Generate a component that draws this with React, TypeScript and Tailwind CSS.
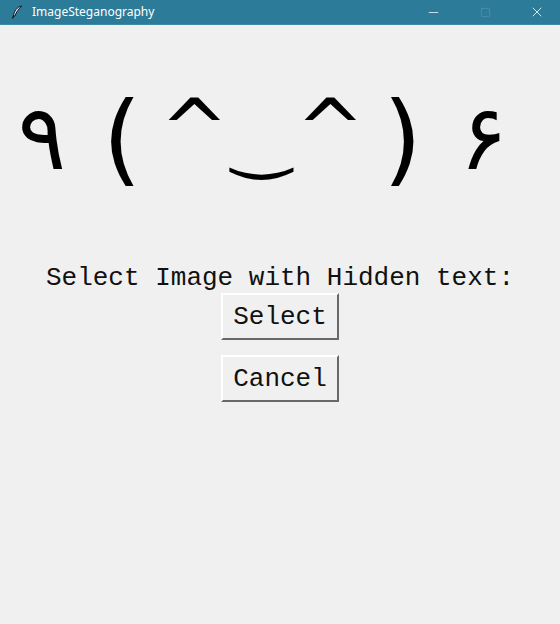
import { Minus, Square, X } from "lucide-react";

const glyphs = [
  { ch: "٩", cls: "w-[84px] text-[90px]" },
  { ch: "(", cls: "w-[76px] text-[100px] -mt-[4px]" },
  { ch: "^", cls: "w-[67px] text-[82px] -mt-[4px]" },
  { ch: "‿", cls: "w-[69px] text-[72px] mt-[9px]" },
  { ch: "^", cls: "w-[68px] text-[82px] -mt-[4px]" },
  { ch: ")", cls: "w-[77px] text-[100px] -mt-[4px]" },
  { ch: "۶", cls: "w-[85px] text-[90px]" },
];

function Feather() {
  return (
    <svg width="12" height="14" viewBox="0 0 12 14">
      <path d="M10.5 1 C6 2 3 6 2.5 11 L4 11 C5 7 8 4 10.5 1 Z" fill="#dfe9f5" stroke="#111" strokeWidth="1" />
      <path d="M2.5 11 L1.5 13.5" stroke="#111" strokeWidth="1.2" />
    </svg>
  );
}

export default function App() {
  return (
    <div className="w-[560px] h-[624px] bg-[#f0f0f0] flex flex-col overflow-hidden">
      <div className="h-[25px] bg-[#2c7b99] flex items-center text-white shrink-0 border-b border-[#3f8aa6]">
        <div className="w-[32px] flex justify-center pl-[2px]">
          <Feather />
        </div>
        <span className="text-[12px] font-['Noto_Sans',sans-serif]">ImageSteganography</span>
        <div className="ml-auto flex items-center">
          <div className="w-[46px] flex justify-center">
            <Minus size={15} strokeWidth={1.2} />
          </div>
          <div className="w-[46px] flex justify-center ml-[6px] opacity-25">
            <Square size={11} strokeWidth={1.2} />
          </div>
          <div className="w-[46px] flex justify-center ml-[6px]">
            <X size={16} strokeWidth={1.2} />
          </div>
        </div>
      </div>

      <div className="flex items-start mt-[68px] h-[120px] font-['DejaVu_Sans',sans-serif] text-black">
        {glyphs.map((g, i) => (
          <span key={i} className={`${g.cls} text-center leading-none`}>
            {g.ch}
          </span>
        ))}
      </div>

      <div className="flex flex-col items-center mt-[50px] font-['Liberation_Mono',monospace] text-[26px] text-[#111]">
        <div className="leading-[30px]">Select Image with Hidden text:</div>
        <button className="mt-0 w-[118px] h-[47px] bg-[#f0f0f0] border-2 border-t-white border-l-white border-b-[#696969] border-r-[#696969] leading-none">
          Select
        </button>
        <button className="mt-[15px] w-[118px] h-[47px] bg-[#f0f0f0] border-2 border-t-white border-l-white border-b-[#696969] border-r-[#696969] leading-none">
          Cancel
        </button>
      </div>
    </div>
  );
}
